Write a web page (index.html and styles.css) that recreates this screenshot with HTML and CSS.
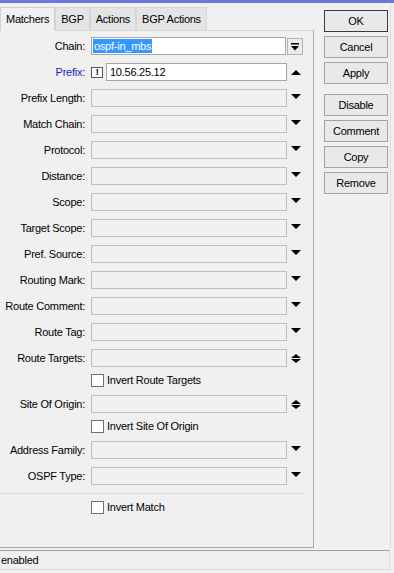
FILE: index.html
```html
<!DOCTYPE html>
<html>
<head>
<meta charset="utf-8">
<link rel="stylesheet" href="styles.css">
</head>
<body>
<div class="titlebar"></div>
<div class="main">
  <div class="left">
    <div class="tabs">
      <div class="tab active">Matchers</div>
      <div class="tab">BGP</div>
      <div class="tab">Actions</div>
      <div class="tab">BGP Actions</div>
    </div>
    <div class="panel">
      <div class="row">
        <div class="lbl">Chain:</div>
        <div class="field edit chain"><span class="sel">ospf-in_mbs</span></div>
        <div class="dd-btn"><svg width="8" height="8" viewBox="0 0 8 8"><rect x="0" y="0" width="8" height="1.5"/><path d="M0 3H8L4 7.5Z"/></svg></div>
      </div>
      <div class="row">
        <div class="lbl blue">Prefix:</div>
        <div class="group">
          <div class="excl">!</div>
          <div class="field edit grow">10.56.25.12</div>
        </div>
        <div class="arrow up"><svg width="10" height="5" viewBox="0 0 10 5"><path d="M0 5H10L5 0Z"/></svg></div>
      </div>
      <div class="row"><div class="lbl">Prefix Length:</div><div class="field"></div><div class="arrow"><svg width="10" height="5" viewBox="0 0 10 5"><path d="M0 0H10L5 5Z"/></svg></div></div>
      <div class="row"><div class="lbl">Match Chain:</div><div class="field"></div><div class="arrow"><svg width="10" height="5" viewBox="0 0 10 5"><path d="M0 0H10L5 5Z"/></svg></div></div>
      <div class="row"><div class="lbl">Protocol:</div><div class="field"></div><div class="arrow"><svg width="10" height="5" viewBox="0 0 10 5"><path d="M0 0H10L5 5Z"/></svg></div></div>
      <div class="row"><div class="lbl">Distance:</div><div class="field"></div><div class="arrow"><svg width="10" height="5" viewBox="0 0 10 5"><path d="M0 0H10L5 5Z"/></svg></div></div>
      <div class="row"><div class="lbl">Scope:</div><div class="field"></div><div class="arrow"><svg width="10" height="5" viewBox="0 0 10 5"><path d="M0 0H10L5 5Z"/></svg></div></div>
      <div class="row"><div class="lbl">Target Scope:</div><div class="field"></div><div class="arrow"><svg width="10" height="5" viewBox="0 0 10 5"><path d="M0 0H10L5 5Z"/></svg></div></div>
      <div class="row"><div class="lbl">Pref. Source:</div><div class="field"></div><div class="arrow"><svg width="10" height="5" viewBox="0 0 10 5"><path d="M0 0H10L5 5Z"/></svg></div></div>
      <div class="row"><div class="lbl">Routing Mark:</div><div class="field"></div><div class="arrow"><svg width="10" height="5" viewBox="0 0 10 5"><path d="M0 0H10L5 5Z"/></svg></div></div>
      <div class="row"><div class="lbl">Route Comment:</div><div class="field"></div><div class="arrow"><svg width="10" height="5" viewBox="0 0 10 5"><path d="M0 0H10L5 5Z"/></svg></div></div>
      <div class="row"><div class="lbl">Route Tag:</div><div class="field"></div><div class="arrow"><svg width="10" height="5" viewBox="0 0 10 5"><path d="M0 0H10L5 5Z"/></svg></div></div>
      <div class="row"><div class="lbl">Route Targets:</div><div class="field"></div><div class="arrow updown"><svg width="10" height="9" viewBox="0 0 10 9"><path d="M0 4H10L5 0Z M0 5H10L5 9Z"/></svg></div></div>
      <div class="check-row"><div class="box"></div><span>Invert Route Targets</span></div>
      <div class="row"><div class="lbl">Site Of Origin:</div><div class="field"></div><div class="arrow updown"><svg width="10" height="9" viewBox="0 0 10 9"><path d="M0 4H10L5 0Z M0 5H10L5 9Z"/></svg></div></div>
      <div class="check-row"><div class="box"></div><span>Invert Site Of Origin</span></div>
      <div class="row"><div class="lbl">Address Family:</div><div class="field"></div><div class="arrow"><svg width="10" height="5" viewBox="0 0 10 5"><path d="M0 0H10L5 5Z"/></svg></div></div>
      <div class="row"><div class="lbl">OSPF Type:</div><div class="field"></div><div class="arrow"><svg width="10" height="5" viewBox="0 0 10 5"><path d="M0 0H10L5 5Z"/></svg></div></div>
      <div class="sep"></div>
      <div class="check-row"><div class="box"></div><span>Invert Match</span></div>
    </div>
  </div>
  <div class="buttons">
    <div class="btn-group">
      <div class="btn default">OK</div>
      <div class="btn">Cancel</div>
      <div class="btn">Apply</div>
    </div>
    <div class="btn-group">
      <div class="btn">Disable</div>
      <div class="btn">Comment</div>
      <div class="btn">Copy</div>
      <div class="btn">Remove</div>
    </div>
  </div>
</div>
<div class="status">enabled</div>
</body>
</html>
```

FILE: styles.css
```css
html, body {
  margin: 0;
  padding: 0;
}
body {
  width: 394px;
  height: 573px;
  overflow: hidden;
  background: #f0f0f0;
  font-family: "Liberation Sans", Arial, sans-serif;
  font-size: 11px;
  letter-spacing: -0.25px;
  color: #000;
}
.titlebar {
  height: 3px;
  background: #6b78d8;
}
.main {
  display: flex;
  width: 391px;
  box-sizing: border-box;
  padding-top: 4px;
  border-right: 1px solid #dedede;
}
.left {
  width: 314px;
  flex: none;
}
.tabs {
  display: flex;
  height: 23px;
}
.tab {
  height: 23px;
  box-sizing: border-box;
  padding: 0 5px;
  line-height: 22px;
  border: 1px solid #d6d6d6;
  border-bottom: none;
  background: #e4e4e4;
  white-space: nowrap;
}
.tab.active {
  position: relative;
  z-index: 1;
  height: 24px;
  margin-bottom: -1px;
  background: #f0f0f0;
  border-color: #cfcfcf;
}
.panel {
  height: 518px;
  box-sizing: border-box;
  border: 1px solid #a9a9a9;
  border-left: none;
  border-top-color: #d6d6d6;
  padding-top: 6px;
}
.row {
  display: flex;
  align-items: flex-start;
  height: 18px;
  margin-bottom: 8px;
}
.lbl {
  width: 85px;
  flex: none;
  text-align: right;
  line-height: 18px;
  white-space: nowrap;
}
.lbl.blue {
  color: #1c1cc4;
}
.field {
  flex: none;
  width: 196px;
  height: 18px;
  margin-left: 6px;
  box-sizing: border-box;
  border: 1px solid #bdbdbd;
}
.field.edit {
  background: #fff;
  border-color: #a6a6a6;
  line-height: 16px;
  padding-left: 2px;
  white-space: nowrap;
}
.field.chain {
  width: 195px;
  padding-left: 0;
}
.sel {
  display: inline-block;
  vertical-align: top;
  margin: 1px 0 0 1px;
  padding: 0 1px;
  line-height: 14px;
  background: #3399ff;
  color: #fff;
}
.group {
  flex: none;
  display: flex;
  width: 196px;
  margin-left: 6px;
}
.group .field {
  margin-left: 3px;
}
.field.grow {
  flex: 1;
  width: auto;
  padding-left: 3px;
}
.excl {
  width: 12px;
  height: 11px;
  margin-top: 4px;
  box-sizing: border-box;
  border: 1px solid #555;
  background: #fafafa;
  font-weight: bold;
  font-size: 9px;
  line-height: 9px;
  text-align: center;
}
.arrow {
  flex: none;
  width: 16px;
  margin-left: 1px;
  padding-top: 5px;
  display: flex;
  justify-content: center;
}
.arrow.up {
  padding-top: 7px;
}
.arrow.updown {
  padding-top: 5px;
}
.arrow svg, .dd-btn svg {
  display: block;
  fill: #000;
}
.dd-btn {
  flex: none;
  width: 16px;
  height: 17px;
  margin: 1px 0 0 1px;
  box-sizing: border-box;
  border: 1px solid #b3b3b3;
  background: #ececec;
  display: flex;
  justify-content: center;
  padding-top: 4px;
}
.check-row {
  display: flex;
  align-items: center;
  height: 13px;
  margin: -1px 0 8px 91px;
  white-space: nowrap;
}
.box {
  width: 13px;
  height: 13px;
  box-sizing: border-box;
  border: 1px solid #6f6f6f;
  background: #fff;
  flex: none;
}
.check-row span {
  margin-left: 3px;
  line-height: 13px;
}
.sep {
  width: 305px;
  height: 1px;
  background: #dcdcdc;
  margin-bottom: 8px;
}
.buttons {
  margin-left: 10px;
  padding-top: 3px;
  width: 64px;
  flex: none;
}
.btn-group + .btn-group {
  margin-top: 10px;
}
.btn {
  width: 64px;
  height: 22px;
  box-sizing: border-box;
  border: 1px solid #a3a3a3;
  background: #e9e9e9;
  text-align: center;
  line-height: 20px;
  margin-bottom: 4px;
}
.btn.default {
  border-color: #3a3a3a;
}
.status {
  margin-top: 2px;
  width: 390px;
  height: 20px;
  box-sizing: border-box;
  border-top: 1px solid #a0a0a0;
  border-right: 1px solid #dcdcdc;
  border-bottom: 1px solid #dcdcdc;
  line-height: 19px;
  padding-left: 1px;
}
```
